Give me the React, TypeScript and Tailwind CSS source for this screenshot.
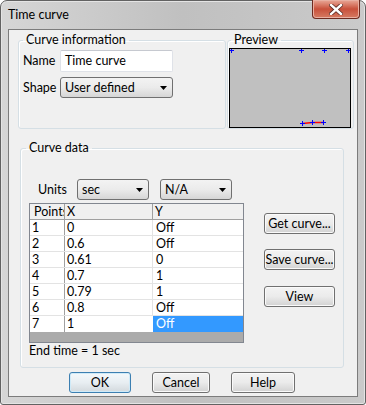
import React from "react";

const rows = [
  ["1", "0", "Off"],
  ["2", "0.6", "Off"],
  ["3", "0.61", "0"],
  ["4", "0.7", "1"],
  ["5", "0.79", "1"],
  ["6", "0.8", "Off"],
  ["7", "1", "Off"],
];

function Arrow() {
  return (
    <svg width="7" height="4" viewBox="0 0 7 4">
      <polygon points="0,0 7,0 3.5,4" fill="#000" />
    </svg>
  );
}

function Combo({ label, className }: { label: string; className: string }) {
  return (
    <div
      className={`flex items-center justify-between rounded-[3px] border border-[#707070] bg-gradient-to-b from-[#f3f3f3] via-[#ebebeb] to-[#d6d6d6] pl-[4px] pr-[5px] ${className}`}
    >
      <span>{label}</span>
      <Arrow />
    </div>
  );
}

function Btn({ label, className, primary }: { label: string; className: string; primary?: boolean }) {
  return (
    <button
      className={`flex items-center justify-center whitespace-nowrap rounded-[3px] border bg-gradient-to-b ${
        primary
          ? "border-[#3c7fb1] from-[#f3f8fb] via-[#e8eef2] to-[#d3d9dd] shadow-[inset_0_0_0_1px_#cfeaf8]"
          : "border-[#707070] from-[#f3f3f3] via-[#ebebeb] to-[#d2d2d2] shadow-[inset_0_0_0_1px_#fafafa]"
      } ${className}`}
    >
      {label}
    </button>
  );
}

function Plus({ x, y }: { x: number; y: number }) {
  return (
    <g stroke="#0000ff" strokeWidth="1">
      <line x1={x - 2} y1={y + 0.5} x2={x + 3} y2={y + 0.5} />
      <line x1={x + 0.5} y1={y - 2} x2={x + 0.5} y2={y + 3} />
    </g>
  );
}

export default function App() {
  return (
    <div className="h-[405px] w-[366px] bg-white font-['Lato',sans-serif] text-[12.5px] leading-[16px] text-black">
      <div className="flex h-full flex-col rounded-t-[7px] rounded-b-[3px] border border-[#626262] bg-gradient-to-r from-[#d6d6d6] via-[#c0c0c0] to-[#cacaca] px-[7px] pb-[7px] shadow-[inset_0_0_0_1px_#e4e4e4]">
        {/* Title bar */}
        <div className="flex h-[28px] items-start justify-between">
          <span className="mt-[6px]">Time curve</span>
          <div className="-mr-[2px] -mt-[1px] flex h-[19px] w-[48px] items-center justify-center rounded-b-[4px] border border-t-0 border-[#6e2b20] bg-gradient-to-b from-[#e8a898] via-[#c8503b] to-[#d57a62] shadow-[inset_0_0_0_1px_#e9b0a2]">
            <svg width="14" height="11" viewBox="0 0 14 11">
              <path d="M2 1 L12 10 M12 1 L2 10" stroke="#5a2a22" strokeWidth="4" strokeLinecap="square" />
              <path d="M2 1 L12 10 M12 1 L2 10" stroke="#ffffff" strokeWidth="2.4" strokeLinecap="square" />
            </svg>
          </div>
        </div>

        {/* Client area */}
        <div className="flex flex-1 flex-col border border-[#7c7c7c] bg-[#f0f0f0]">
          <div className="flex pl-[9px] pt-[2px]">
            <fieldset className="h-[97px] w-[208px] rounded-[3px] border border-[#d5dfe5] shadow-[inset_1px_1px_0_#fff]">
              <legend className="ml-[4px] px-[3px]">Curve information</legend>
              <div className="flex flex-col gap-[5px] pl-[4px] pt-[2px]">
                <div className="flex items-center">
                  <span className="w-[37px]">Name</span>
                  <div className="flex h-[22px] w-[113px] items-center rounded-[2px] border border-[#dfe2e8] border-t-[#c6c9d0] bg-white pl-[4px]">
                    Time curve
                  </div>
                </div>
                <div className="flex items-center">
                  <span className="w-[37px]">Shape</span>
                  <Combo label="User defined" className="h-[21px] w-[113px]" />
                </div>
              </div>
            </fieldset>
            <fieldset className="ml-[1px] h-[97px] w-[127px] rounded-[3px] border border-[#d5dfe5] shadow-[inset_1px_1px_0_#fff]">
              <legend className="ml-[3px] px-[3px]">Preview</legend>
              <div className="pl-[1px]">
                <div className="h-[80px] w-[122px] border border-black bg-[#c0c0c0]">
                  <svg width="120" height="78" viewBox="0 0 120 78">
                    <polyline points="72.5,74.5 82.5,73.5 93.5,73.5" fill="none" stroke="#ff0000" strokeWidth="1.5" />
                    <Plus x={1} y={1} />
                    <Plus x={71} y={1} />
                    <Plus x={94} y={1} />
                    <Plus x={118} y={1} />
                    <Plus x={72} y={74} />
                    <Plus x={82} y={73} />
                    <Plus x={93} y={73} />
                  </svg>
                </div>
              </div>
            </fieldset>
          </div>

          {/* Curve data */}
          <fieldset className="ml-[11px] mt-[11px] h-[228px] w-[324px] rounded-[3px] border border-[#d5dfe5] shadow-[inset_1px_1px_0_#fff]">
            <legend className="ml-[5px] px-[3px]">Curve data</legend>
            <div className="mt-[23px] flex items-center pl-[17px]">
              <span className="w-[39px]">Units</span>
              <Combo label="sec" className="h-[21px] w-[72px]" />
              <Combo label="N/A" className="ml-[11px] h-[21px] w-[72px]" />
            </div>
            <div className="mt-[3px] flex pl-[8px]">
              <div className="w-[215px] border border-[#828790] bg-white leading-[15px]">
                <div className="flex h-[16px] border-b border-[#a0a0a0] bg-[#f0f0f0]">
                  <div className="w-[35px] overflow-hidden whitespace-nowrap border-r border-[#a0a0a0] pl-[4px]">
                    <span className="block w-[30px] overflow-hidden">Points</span>
                  </div>
                  <div className="w-[88px] border-r border-[#a0a0a0] pl-[2px]">X</div>
                  <div className="flex-1 pl-[2px]">Y</div>
                </div>
                {rows.map((r, i) => {
                  const last = i === rows.length - 1;
                  return (
                    <div key={r[0]} className={`flex h-[16px] ${last ? "" : "border-b border-[#e3e3e3]"}`}>
                      <div className="w-[35px] border-r border-[#a0a0a0] pl-[2px]">{r[0]}</div>
                      <div className={`w-[88px] pl-[2px] ${last ? "" : "border-r border-[#e3e3e3]"}`}>{r[1]}</div>
                      <div className={`flex-1 pl-[3px] ${last ? "bg-[#3399ff] text-white" : ""}`}>{r[2]}</div>
                    </div>
                  );
                })}
                <div className="h-[10px] bg-[#ababab]" />
              </div>
              <div className="ml-[20px] flex flex-col pt-[10px]">
                <Btn label="Get curve..." className="h-[21px] w-[71px]" />
                <Btn label="Save curve..." className="mt-[15px] h-[21px] w-[71px]" />
                <Btn label="View" className="mt-[16px] h-[21px] w-[71px]" />
              </div>
            </div>
            <div className="pl-[8px]">End time = 1 sec</div>
          </fieldset>

          {/* Dialog buttons */}
          <div className="mt-[4px] flex pl-[60px]">
            <Btn label="OK" primary className="h-[21px] w-[62px]" />
            <Btn label="Cancel" className="ml-[21px] h-[21px] w-[58px]" />
            <Btn label="Help" className="ml-[21px] h-[21px] w-[64px]" />
          </div>
        </div>
      </div>
    </div>
  );
}
